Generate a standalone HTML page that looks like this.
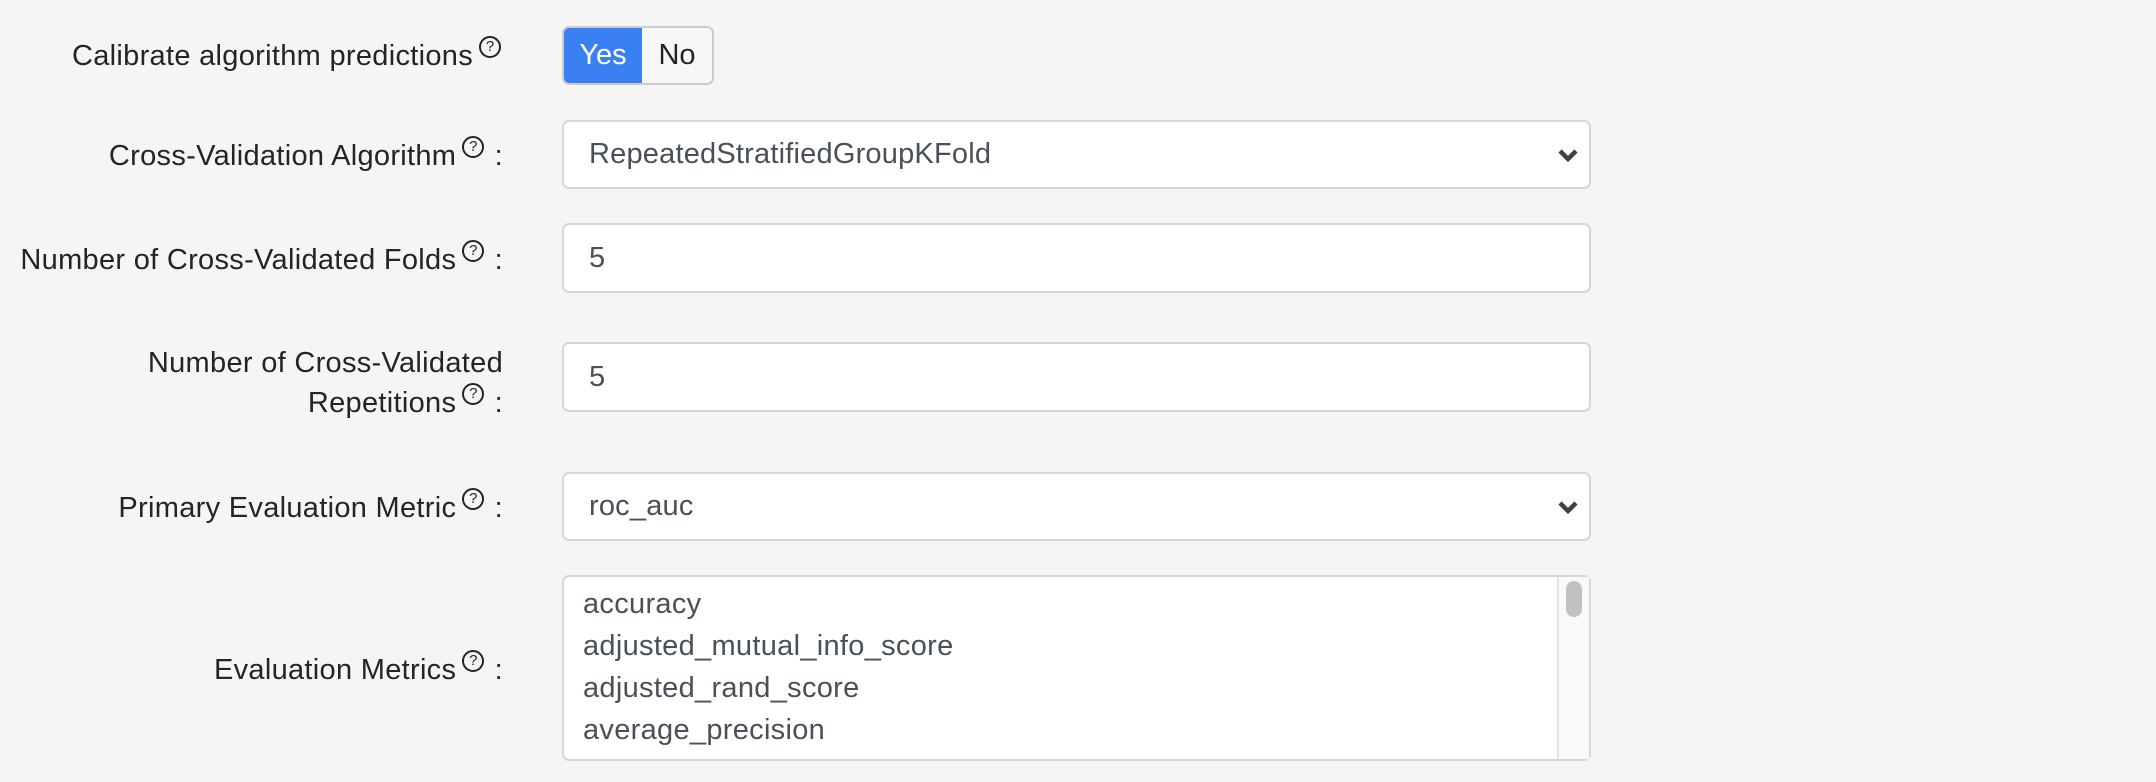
<!DOCTYPE html>
<html><head><meta charset="utf-8">
<style>
body{margin:0;width:2156px;height:782px;background:#f5f5f5;font-family:"Liberation Sans",sans-serif;color:#212529;position:relative;overflow:hidden}
.lbl{position:absolute;right:1653px;font-size:29px;letter-spacing:0.3px;text-align:right;line-height:40px;white-space:nowrap}
.q{display:inline-block;width:18px;height:18px;border:2px solid #212529;border-radius:50%;font-size:15px;line-height:18px;text-align:center;vertical-align:14px;margin-left:6px;margin-right:2px;letter-spacing:0;box-sizing:content-box}
.box{position:absolute;left:562px;width:1029px;background:#fff;border:2px solid #d3d7db;border-radius:7px;box-sizing:border-box;font-size:29px;letter-spacing:0.2px;color:#495057;padding-left:25px;display:flex;align-items:center}
.chev{position:absolute;right:10px;top:50%;margin-top:-8px}
.tog{position:absolute;left:562px;top:26px;width:152px;height:59px;border:2px solid #ccc;border-radius:7px;box-sizing:border-box;overflow:hidden;display:flex;font-size:29px}
.tog div{display:flex;align-items:center;justify-content:center}
.opt{position:absolute;left:583px;font-size:29px;letter-spacing:0.3px;color:#495057}
</style></head><body>
<div class="lbl" style="top:36px">Calibrate algorithm predictions<span class="q">?</span></div>
<div class="tog"><div style="width:78px;background:#3a80f3;color:#fff">Yes</div><div style="flex:1;background:#f7f7f7;color:#212529">No</div></div>

<div class="lbl" style="top:136px">Cross-Validation Algorithm<span class="q">?</span> :</div>
<div class="box" style="top:120px;height:69px">RepeatedStratifiedGroupKFold<svg class="chev" width="22" height="16" viewBox="0 0 22 16"><path d="M3 4l8 8 8-8" fill="none" stroke="#3d4248" stroke-width="4.5"/></svg></div>

<div class="lbl" style="top:240px">Number of Cross-Validated Folds<span class="q">?</span> :</div>
<div class="box" style="top:223px;height:70px">5</div>

<div class="lbl" style="top:343px;line-height:40px">Number of Cross-Validated<br>Repetitions<span class="q">?</span> :</div>
<div class="box" style="top:342px;height:70px">5</div>

<div class="lbl" style="top:488px">Primary Evaluation Metric<span class="q">?</span> :</div>
<div class="box" style="top:472px;height:69px">roc_auc<svg class="chev" width="22" height="16" viewBox="0 0 22 16"><path d="M3 4l8 8 8-8" fill="none" stroke="#3d4248" stroke-width="4.5"/></svg></div>

<div class="lbl" style="top:650px">Evaluation Metrics<span class="q">?</span> :</div>
<div class="box" style="top:575px;height:186px;display:block;padding:0">
 <div style="position:absolute;right:0;top:0;bottom:0;width:30px;background:#f9f9f9;border-left:2px solid #e4e4e4"></div>
 <div style="position:absolute;right:7px;top:4px;width:16px;height:36px;border-radius:8px;background:#c1c1c1"></div>
</div>
<div class="opt" style="top:588px">accuracy</div>
<div class="opt" style="top:630px">adjusted_mutual_info_score</div>
<div class="opt" style="top:672px">adjusted_rand_score</div>
<div class="opt" style="top:714px">average_precision</div>
</body></html>
